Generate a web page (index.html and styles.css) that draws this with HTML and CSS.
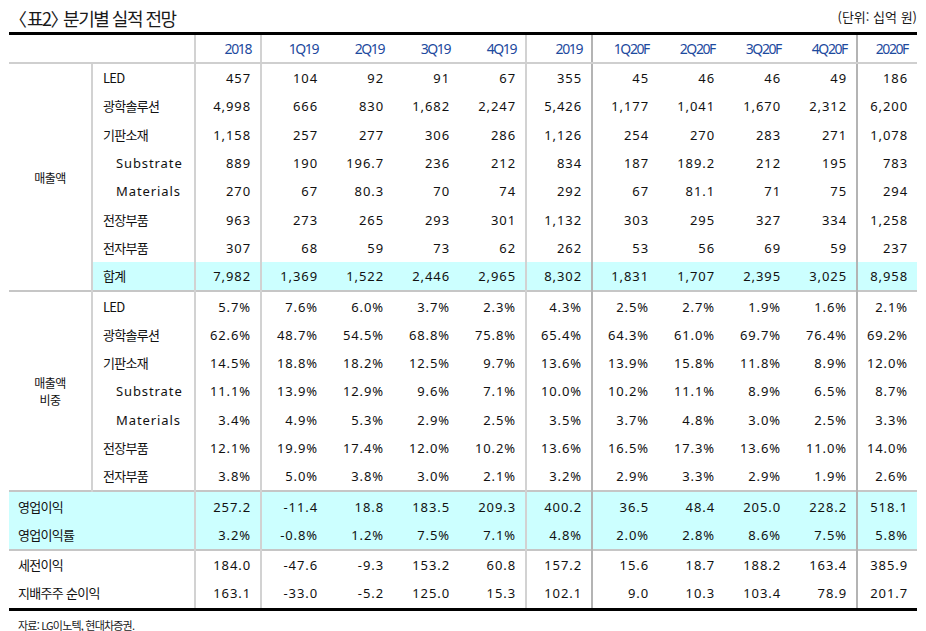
FILE: index.html
```html
<!DOCTYPE html>
<html lang="ko">
<head>
<meta charset="utf-8">
<title>분기별 실적 전망</title>
<link rel="stylesheet" href="styles.css">
</head>
<body>
<div class="page">
  <div class="title-row">
    <h1 class="title"><span class="br">〈</span>표2<span class="br">〉</span> 분기별 실적 전망</h1>
    <span class="unit">(단위: 십억 원)</span>
  </div>
  <table class="data">
    <colgroup>
      <col class="c-cat"><col class="c-item">
      <col class="c-n"><col class="c-n"><col class="c-n"><col class="c-n"><col class="c-n7">
      <col class="c-n"><col class="c-n"><col class="c-n"><col class="c-n"><col class="c-n7">
      <col class="c-last">
    </colgroup>
    <thead>
      <tr>
        <th colspan="2" class="blank a-r"></th>
        <th class="a-r">2018</th><th>1Q19</th><th>2Q19</th><th>3Q19</th><th class="b-l">4Q19</th>
        <th class="b-r">2019</th><th>1Q20F</th><th>2Q20F</th><th>3Q20F</th><th>4Q20F</th><th class="f-l">2020F</th>
      </tr>
    </thead>
    <tbody class="sec">
      <tr><td class="cat" rowspan="8">매출액</td><td class="item">LED</td><td class="a-r">457</td><td>104</td><td>92</td><td>91</td><td class="b-l">67</td><td class="b-r">355</td><td>45</td><td>46</td><td>46</td><td>49</td><td class="f-l">186</td></tr>
      <tr><td class="item">광학솔루션</td><td class="a-r">4,998</td><td>666</td><td>830</td><td>1,682</td><td class="b-l">2,247</td><td class="b-r">5,426</td><td>1,177</td><td>1,041</td><td>1,670</td><td>2,312</td><td class="f-l">6,200</td></tr>
      <tr><td class="item">기판소재</td><td class="a-r">1,158</td><td>257</td><td>277</td><td>306</td><td class="b-l">286</td><td class="b-r">1,126</td><td>254</td><td>270</td><td>283</td><td>271</td><td class="f-l">1,078</td></tr>
      <tr><td class="item sub">Substrate</td><td class="a-r">889</td><td>190</td><td>196.7</td><td>236</td><td class="b-l">212</td><td class="b-r">834</td><td>187</td><td>189.2</td><td>212</td><td>195</td><td class="f-l">783</td></tr>
      <tr><td class="item sub">Materials</td><td class="a-r">270</td><td>67</td><td>80.3</td><td>70</td><td class="b-l">74</td><td class="b-r">292</td><td>67</td><td>81.1</td><td>71</td><td>75</td><td class="f-l">294</td></tr>
      <tr><td class="item">전장부품</td><td class="a-r">963</td><td>273</td><td>265</td><td>293</td><td class="b-l">301</td><td class="b-r">1,132</td><td>303</td><td>295</td><td>327</td><td>334</td><td class="f-l">1,258</td></tr>
      <tr><td class="item">전자부품</td><td class="a-r">307</td><td>68</td><td>59</td><td>73</td><td class="b-l">62</td><td class="b-r">262</td><td>53</td><td>56</td><td>69</td><td>59</td><td class="f-l">237</td></tr>
      <tr class="hl"><td class="item">합계</td><td class="a-r">7,982</td><td>1,369</td><td>1,522</td><td>2,446</td><td class="b-l">2,965</td><td class="b-r">8,302</td><td>1,831</td><td>1,707</td><td>2,395</td><td>3,025</td><td class="f-l">8,958</td></tr>
    </tbody>
    <tbody class="sec">
      <tr><td class="cat" rowspan="7">매출액<br>비중</td><td class="item">LED</td><td class="a-r">5.7%</td><td>7.6%</td><td>6.0%</td><td>3.7%</td><td class="b-l">2.3%</td><td class="b-r">4.3%</td><td>2.5%</td><td>2.7%</td><td>1.9%</td><td>1.6%</td><td class="f-l">2.1%</td></tr>
      <tr><td class="item">광학솔루션</td><td class="a-r">62.6%</td><td>48.7%</td><td>54.5%</td><td>68.8%</td><td class="b-l">75.8%</td><td class="b-r">65.4%</td><td>64.3%</td><td>61.0%</td><td>69.7%</td><td>76.4%</td><td class="f-l">69.2%</td></tr>
      <tr><td class="item">기판소재</td><td class="a-r">14.5%</td><td>18.8%</td><td>18.2%</td><td>12.5%</td><td class="b-l">9.7%</td><td class="b-r">13.6%</td><td>13.9%</td><td>15.8%</td><td>11.8%</td><td>8.9%</td><td class="f-l">12.0%</td></tr>
      <tr><td class="item sub">Substrate</td><td class="a-r">11.1%</td><td>13.9%</td><td>12.9%</td><td>9.6%</td><td class="b-l">7.1%</td><td class="b-r">10.0%</td><td>10.2%</td><td>11.1%</td><td>8.9%</td><td>6.5%</td><td class="f-l">8.7%</td></tr>
      <tr><td class="item sub">Materials</td><td class="a-r">3.4%</td><td>4.9%</td><td>5.3%</td><td>2.9%</td><td class="b-l">2.5%</td><td class="b-r">3.5%</td><td>3.7%</td><td>4.8%</td><td>3.0%</td><td>2.5%</td><td class="f-l">3.3%</td></tr>
      <tr><td class="item">전장부품</td><td class="a-r">12.1%</td><td>19.9%</td><td>17.4%</td><td>12.0%</td><td class="b-l">10.2%</td><td class="b-r">13.6%</td><td>16.5%</td><td>17.3%</td><td>13.6%</td><td>11.0%</td><td class="f-l">14.0%</td></tr>
      <tr><td class="item">전자부품</td><td class="a-r">3.8%</td><td>5.0%</td><td>3.8%</td><td>3.0%</td><td class="b-l">2.1%</td><td class="b-r">3.2%</td><td>2.9%</td><td>3.3%</td><td>2.9%</td><td>1.9%</td><td class="f-l">2.6%</td></tr>
    </tbody>
    <tbody class="sec">
      <tr class="hl"><td class="wide" colspan="2">영업이익</td><td class="a-r">257.2</td><td>-11.4</td><td>18.8</td><td>183.5</td><td class="b-l">209.3</td><td class="b-r">400.2</td><td>36.5</td><td>48.4</td><td>205.0</td><td>228.2</td><td class="f-l">518.1</td></tr>
      <tr class="hl"><td class="wide" colspan="2">영업이익률</td><td class="a-r">3.2%</td><td>-0.8%</td><td>1.2%</td><td>7.5%</td><td class="b-l">7.1%</td><td class="b-r">4.8%</td><td>2.0%</td><td>2.8%</td><td>8.6%</td><td>7.5%</td><td class="f-l">5.8%</td></tr>
    </tbody>
    <tbody class="sec last">
      <tr><td class="wide" colspan="2">세전이익</td><td class="a-r">184.0</td><td>-47.6</td><td>-9.3</td><td>153.2</td><td class="b-l">60.8</td><td class="b-r">157.2</td><td>15.6</td><td>18.7</td><td>188.2</td><td>163.4</td><td class="f-l">385.9</td></tr>
      <tr><td class="wide" colspan="2">지배주주 순이익</td><td class="a-r">163.1</td><td>-33.0</td><td>-5.2</td><td>125.0</td><td class="b-l">15.3</td><td class="b-r">102.1</td><td>9.0</td><td>10.3</td><td>103.4</td><td>78.9</td><td class="f-l">201.7</td></tr>
    </tbody>
  </table>
  <p class="source">자료: LG이노텍, 현대차증권.</p>
</div>
</body>
</html>
```

FILE: styles.css
```css
html, body {
  margin: 0;
  padding: 0;
  background: #ffffff;
}

.page {
  padding: 0 9px;
  width: 908px;
  font-family: "Noto Sans", "Noto Sans CJK KR", sans-serif;
  color: #111111;
}

.title-row {
  display: flex;
  justify-content: space-between;
  align-items: flex-end;
  height: 32px;
  box-sizing: border-box;
}

.title {
  margin: 0 0 0 9px;
  font-family: "Noto Sans CJK KR", sans-serif;
  font-weight: 400;
  font-size: 18px;
  letter-spacing: -1.5px;
  line-height: 26px;
  padding-bottom: 1px;
  color: #1a1a1a;
}

.title .br {
  font-feature-settings: "halt" 1;
  letter-spacing: 0;
}

.unit {
  font-family: "Noto Sans CJK KR", sans-serif;
  font-size: 13px;
  letter-spacing: 0;
  line-height: 16px;
  padding-bottom: 7px;
  color: #1a1a1a;
}

.data {
  width: 908px;
  table-layout: fixed;
  border-collapse: collapse;
  border-top: 3px solid #000000;
  border-bottom: 3px solid #000000;
}

.c-cat { width: 83px; }
.c-item { width: 103px; }
.c-n { width: 66px; }
.c-n7 { width: 67px; }
.c-last { width: 60px; }

.data th,
.data td {
  padding: 0 9px 0 0;
  text-align: right;
  white-space: nowrap;
  font-weight: 400;
}

.data th {
  height: 27px;
  font-family: "Noto Sans", sans-serif;
  font-size: 14px;
  letter-spacing: -1.4px;
  color: #1d4a9e;
  border-bottom: 2px solid #cfcfcf;
  padding-right: 9px;
}

.data td {
  height: 28.3px;
  font-size: 13px;
  letter-spacing: 0.9px;
  line-height: 18px;
}

.data td.a-r, .data th.a-r { border-right: 2px solid #d2d2d2; }
.data td.b-l, .data th.b-l { border-right: 2px solid #d2d2d2; }
.data td.b-r, .data th.b-r { border-right: 2px solid #b4b4b4; }
.data td.f-l, .data th.f-l { border-left: 2px solid #b4b4b4; }

.data td.a-r { border-left: 2px solid #d2d2d2; }

.sec { border-bottom: 2px solid #c6c6c6; }
.sec.last { border-bottom: 3px solid #000000; }

.data td.cat {
  text-align: center;
  padding: 0;
  font-family: "Noto Sans CJK KR", sans-serif;
  font-size: 12px;
  letter-spacing: -0.6px;
  line-height: 17px;
  border-right: 2px solid #d2d2d2;
  background: #ffffff;
}

.data td.item,
.data td.wide {
  text-align: left;
  padding: 0 0 0 10px;
  font-family: "Noto Sans CJK KR", sans-serif;
  font-size: 13px;
  letter-spacing: -0.7px;
}

.data td.wide { padding-left: 9px; }

.data td.item.sub {
  padding-left: 23px;
  font-family: "Noto Sans", sans-serif;
  font-size: 13px;
  letter-spacing: 0.9px;
}

.hl td {
  background: #ccffff;
}

.source {
  margin: 7px 0 0 9px;
  font-family: "Noto Sans CJK KR", sans-serif;
  font-size: 11px;
  letter-spacing: -0.8px;
  line-height: 14px;
  color: #1a1a1a;
}
```
